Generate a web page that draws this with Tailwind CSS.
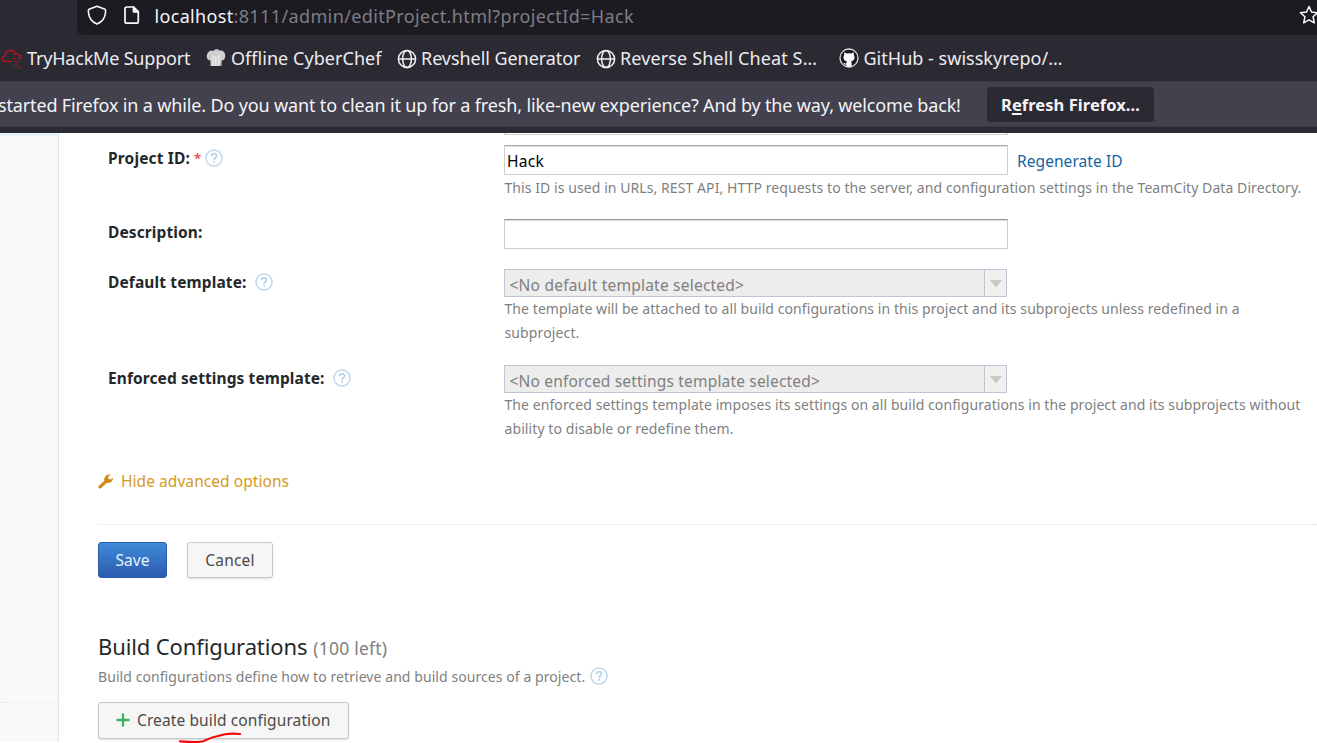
<!DOCTYPE html>
<html lang="en">
<head>
<meta charset="utf-8">
<title>Hack - Edit project</title>
<script src="https://cdn.jsdelivr.net/npm/@tailwindcss/browser@4"></script>
</head>
<body class="flex h-[743px] w-[1317px] flex-col overflow-hidden bg-white font-['Noto_Sans',sans-serif] whitespace-nowrap">
<svg class="hidden">
  <symbol id="globe" viewBox="0 0 20 20"><g fill="none" stroke="#f0f0f4" stroke-width="1.5"><circle cx="10" cy="10" r="8.6"/><ellipse cx="10" cy="10" rx="4.4" ry="8.6"/><path d="M1.4 10h17.2"/></g></symbol>
  <symbol id="help" viewBox="0 0 18 18"><circle cx="9" cy="9" r="8" fill="none" stroke="#bdd8ea" stroke-width="1.5"/><path d="M6.5 7.2C6.5 3.9 11.6 4 11.6 6.9C11.6 8.8 9.1 8.8 9.1 10.9M9.1 12.1v1.7" fill="none" stroke="#b5d3e8" stroke-width="1.7"/></symbol>
</svg>

<!-- Address bar -->
<header class="flex h-[35px] shrink-0 bg-[#2b2a33] pl-[77px]">
  <div class="flex flex-1 items-start rounded-bl-md bg-[#1c1b22] pl-[10px]">
    <svg class="mt-[5px] h-5 w-5" viewBox="0 0 20 20" fill="none" stroke="#fbfbfe" stroke-width="1.6" stroke-linejoin="round"><path d="M10 1.2L18 4.2C18.8 4.5 18.6 5.6 18.6 6.8C18.3 12.5 15.300 17 10 19C4.700 17 1.700 12.500 1.400 6.800C1.400 5.600 1.200 4.500 2 4.200Z"/></svg>
    <svg class="mt-[5px] ml-[16px] h-5 w-[18px]" viewBox="0 0 18 20" fill="none" stroke="#fbfbfe" stroke-width="1.7" stroke-linejoin="round"><path d="M4 2H10.500L15.300 6.800V16.500Q15.300 18.200 13.600 18.200H3.700Q2 18.200 2 16.500V3.700Q2 2 4 2Z"/><path d="M10.500 2V6.800H15.300Z" fill="#fbfbfe"/></svg>
    <div class="ml-[13.5px] flex h-8 items-center text-[18px] leading-8 text-[#f4f4f8]"><span class="tracking-[0.326px]">localhost</span><span class="tracking-[0.38px] text-[#7f7e85]">:8111/admin/editProject.html?projectId=Hack</span></div>
    <svg class="mt-[5px] mr-[-2px] ml-auto h-5 w-5" viewBox="0 0 20 20" fill="none" stroke="#fbfbfe" stroke-width="1.5" stroke-linejoin="round"><path d="M10 1.500L12.500 7L18.500 7.700L14.100 11.800L15.300 17.800L10 14.900L4.700 17.800L5.900 11.800L1.500 7.700L7.500 7Z"/></svg>
  </div>
</header>

<!-- Bookmarks toolbar -->
<nav class="flex h-[46px] shrink-0 items-center bg-[#2b2a33] pl-px text-[18px] leading-8 text-[#ececf0]">
  <svg class="mt-[1px] h-5 w-[21px]" viewBox="0 0 21 20" fill="none" stroke="#b3151f" stroke-width="1.500"><path d="M11 12.500H4.500C.4 12.500 .2 7.200 4.200 7.100C4.700 .2 13 -.2 14.300 5.200C18.200 4.600 20.200 7.500 20 9.500"/><path d="M11 9.700h4M17 9.700h3M13 12.500h6M14 15h3M12 17h5M16 19h4" stroke-width="1.200" stroke-opacity=".75"/></svg>
  <span class="ml-[5px] w-[163px] tracking-[-0.19px]">TryHackMe Support</span>
  <svg class="ml-[16px] h-5 w-5" viewBox="0 0 20 20"><path d="M4.500 18V12.500C.5 12.800-.2 7.500 1.800 5C3.500 2 6 2 7.300 3C9 .8 12 .8 13.600 2.800C17 1.800 19.700 5 19.200 8.500C18.900 11.500 17.500 12.600 15.500 12.500V18Z" fill="#cfcfcf"/><path d="M7 7.500v10.500M9.800 8v10M13 7.500v10.500" stroke="#eee" stroke-width="1.300"/><path d="M15.500 12.500V18H13.500Z" fill="#999"/></svg>
  <span class="ml-[5px] w-[151px] tracking-[0.044px]">Offline CyberChef</span>
  <svg class="mt-[1px] ml-[15px] h-5 w-5"><use href="#globe"/></svg>
  <span class="ml-[4px] w-[159px] tracking-[-0.06px]">Revshell Generator</span>
  <svg class="mt-[1px] ml-[16px] h-5 w-5"><use href="#globe"/></svg>
  <span class="ml-[4px] w-[197px] tracking-[0.12px]">Reverse Shell Cheat S…</span>
  <svg class="ml-[22px] h-5 w-5" viewBox="0 0 20 20"><circle cx="10" cy="10" r="9" fill="#1b1a20" stroke="#dcdcdf" stroke-width="1.300"/><path d="M5.400 4.300L7.700 5.600Q10 5 12.300 5.600L14.600 4.300Q15.100 5.700 14.700 6.800Q16 8.300 15.400 10.500C14.900 12.500 13.400 13.100 12 13.400Q12.600 14 12.600 15.200V18.400Q10 19.200 7.400 18.400V16.700C5.500 17 5.200 15.800 4.300 15C5.800 14.700 6 15.900 7.400 15.600Q7.300 14 8 13.400C6.500 13.100 5.100 12.500 4.600 10.500Q4 8.300 5.300 6.800Q4.900 5.700 5.400 4.300Z" fill="#fbfbfe"/></svg>
  <span class="ml-[4.500px] tracking-[0.02px]">GitHub - swisskyrepo/…</span>
</nav>

<!-- Notification bar -->
<aside class="flex h-[52px] shrink-0 items-start border-t border-b-6 border-t-[#3b3a45] border-b-[#2b2a33] bg-[#42414d] shadow-[inset_0_-1px_0_#3b3a45] text-[#f4f4f8]">
  <p class="ml-[-2px] w-[963px] text-[18px] leading-[46px] tracking-[-0.148px]">started Firefox in a while. Do you want to clean it up for a fresh, like-new experience? And by the way, welcome back!</p>
  <button class="mt-[5px] ml-[26px] h-[35px] w-[167px] rounded-[4px] bg-[#2b2a33] text-[16.5px] leading-[33px] font-bold tracking-[0.053px]">R<span class="underline decoration-2 underline-offset-[2px]">e</span>fresh Firefox…</button>
</aside>

<div class="mb-px flex min-h-0 flex-1">
  <!-- Project tree sidebar -->
  <aside class="flex w-[59px] shrink-0 flex-col border-r border-[#dde4ea] bg-[#f7f9fb]">
    <div class="h-[3px] bg-[#e6f2fc]"></div>
    <div class="h-[567px] border-b border-dotted border-[#e4e8eb]"></div>
  </aside>

  <main class="min-w-0 flex-1 pl-[39px] text-[15.5px] leading-6 text-[#25282b]">
    <div class="ml-[406px] h-[2px] w-[504px] border border-t-0 border-[#ccc]"></div>
    <form class="pt-[10px]">
      <div class="flex h-[74px]">
        <div class="flex w-[406px] pt-px pl-[10px]">
          <label class="w-[82px] font-bold tracking-[0.155px]">Project ID:</label>
          <span class="ml-[4px] w-[7px] text-[13px] font-bold text-[#e0565f]">*</span>
          <svg class="mt-[3px] ml-[3.500px] h-[18px] w-[18px]"><use href="#help"/></svg>
        </div>
        <div>
          <div class="flex h-[30px] items-center">
            <div class="h-[30px] w-[504px] border border-[#ccc] border-t-[#aaa] pl-[2px] leading-[30px] tracking-[0.273px] text-black shadow-[inset_0_1px_0_#ddd]">Hack</div>
            <a class="ml-[9px] pt-[2px] tracking-[0.07px] text-[#1564a3]">Regenerate ID</a>
          </div>
          <p class="mt-px ml-[0.500px] text-[14px] tracking-[0.074px] text-[#7f7f7f]">This ID is used in URLs, REST API, HTTP requests to the server, and configuration settings in the TeamCity Data Directory.</p>
        </div>
      </div>
      <div class="flex h-[50px]">
        <label class="w-[406px] pt-px pl-[10px] font-bold tracking-[0.1px]">Description:</label>
        <div class="h-[30px] w-[504px] border border-[#ccc] border-t-[#999] shadow-[inset_0_1px_0_#ddd]"></div>
      </div>
      <div class="flex h-[96px]">
        <div class="flex w-[406px] pt-px pl-[10px]">
          <label class="w-[138px] font-bold tracking-[0.119px]">Default template:</label>
          <svg class="mt-[3px] ml-[9px] h-[18px] w-[18px]"><use href="#help"/></svg>
        </div>
        <div>
          <div class="flex h-[28px] w-[503px] border border-[#c3c5d6] bg-[#ededed] text-[#808080]">
            <span class="flex-1 pl-[4.500px] leading-[30px] tracking-[0.22px]">&lt;No default template selected&gt;</span>
            <span class="flex w-[22px] justify-center border-l border-[#c3c5d6] bg-[#f0f0f0] pt-[10px]"><svg class="h-[8px] w-[12px]" viewBox="0 0 12 8"><path d="M0 0H12L6 7.500Z" fill="#c8c8c8"/></svg></span>
          </div>
          <p class="ml-[0.500px] text-[14px] tracking-[0.07px] text-[#7f7f7f]">The template will be attached to all build configurations in this project and its subprojects unless redefined in a<br><span class="tracking-[0.128px]">subproject.</span></p>
        </div>
      </div>
      <div class="flex h-[104px]">
        <div class="flex w-[406px] pt-px pl-[10px]">
          <label class="w-[216px] font-bold tracking-[0.09px]">Enforced settings template:</label>
          <svg class="mt-[3px] ml-[9px] h-[18px] w-[18px]"><use href="#help"/></svg>
        </div>
        <div>
          <div class="flex h-[28px] w-[503px] border border-[#c3c5d6] bg-[#ededed] text-[#808080]">
            <span class="flex-1 pl-[4.500px] leading-[30px] tracking-[0.18px]">&lt;No enforced settings template selected&gt;</span>
            <span class="flex w-[22px] justify-center border-l border-[#c3c5d6] bg-[#f0f0f0] pt-[10px]"><svg class="h-[8px] w-[12px]" viewBox="0 0 12 8"><path d="M0 0H12L6 7.500Z" fill="#c8c8c8"/></svg></span>
          </div>
          <p class="ml-[0.500px] text-[14px] tracking-[0.075px] text-[#7f7f7f]">The enforced settings template imposes its settings on all build configurations in the project and its subprojects without<br><span class="tracking-[0.092px]">ability to disable or redefine them.</span></p>
        </div>
      </div>
      <div class="flex h-[56px] items-start border-b border-dotted border-[#e2e2e2] text-[#d49a1e]">
        <svg class="mt-[5px] h-[15px] w-[15px]" viewBox="0 0 15 15"><path d="M.6 12.200L6.300 6.700C5.600 3.200 8.500 -.3 12.700 .5L9.900 2.900L10.700 5L12.700 5.500L14.900 3.700C15.200 7.400 12 9.300 8.800 8.800L3 14.300Q1.800 15 .7 13.900Q-.1 13 .6 12.200Z" fill="#d08a0c"/></svg>
        <a class="ml-[8px] tracking-[0.06px]">Hide advanced options</a>
      </div>
      <div class="mt-[17px] flex gap-[20px]">
        <button class="h-[36px] w-[69px] rounded-[3px] border border-[#2a5caa] bg-linear-to-b from-[#3f8bd8] to-[#2b5bae] leading-[33px] tracking-[0.043px] text-[#eaf2fb]">Save</button>
        <button class="h-[36px] w-[86px] rounded-[3px] border border-[#c9c9c9] bg-[#f6f6f6] leading-[33px] tracking-[0.2px] text-[#4a4a4a] shadow-[0_1px_2px_#0002]">Cancel</button>
      </div>
    </form>
    <section class="pt-[52px]">
      <h2 class="h-[35px] text-[22px] leading-8 tracking-[-0.12px]">Build Configurations<span class="ml-[6px] text-[17.500px] tracking-[0.200px] text-[#808080]">(100 left)</span></h2>
      <div class="flex text-[14px] text-[#7f7f7f]"><p class="w-[488px] tracking-[0.07px]">Build configurations define how to retrieve and build sources of a project.</p><svg class="mt-[2px] ml-[4px] h-[18px] w-[18px]"><use href="#help"/></svg></div>
      <div class="relative mt-[13px] w-[251px]">
        <button class="flex h-[37px] w-[251px] items-center rounded-[3px] border border-[#c6c6c6] bg-[#f6f6f6] pb-[2px] pl-[17px] text-[#4a4a4a] shadow-[0_1px_2px_#0002]">
          <svg class="mt-px h-[14px] w-[14px]" viewBox="0 0 14 14"><path d="M7 .5v13M.5 7h13" stroke="#3cb35a" stroke-width="2.300"/></svg>
          <span class="ml-[7px] tracking-[0.11px]">Create build configuration</span>
        </button>
        <!-- Hand-drawn red underline -->
        <svg class="absolute top-[29px] left-[80px] h-[14px] w-[66px]" viewBox="0 0 66 14" fill="none" stroke="#f3060c" stroke-width="2.200" stroke-linecap="round"><path d="M2 10.300C10 10.800 20 12 26 10C30 8 33 6.200 40 5C46 2.800 54 2 62 3"/></svg>
      </div>
    </section>
  </main>
</div>
</body>
</html>
